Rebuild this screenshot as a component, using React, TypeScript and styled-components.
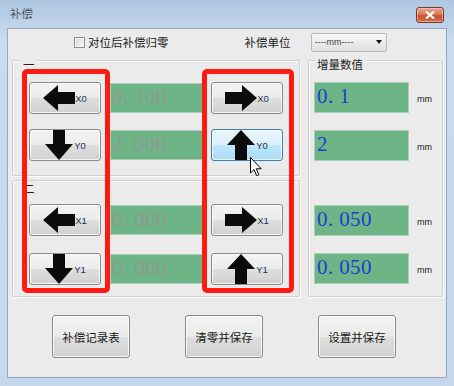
import styled, { createGlobalStyle } from 'styled-components';

const GlobalStyle = createGlobalStyle`
    html, body {
        margin: 0;
        padding: 0;
        background: #c4d6ea;
    }
    * {
        box-sizing: border-box;
    }
`

const CJK = `"Noto Sans CJK SC", "Noto Sans", sans-serif`

type ArrowDir = 'left' | 'right' | 'up' | 'down';

const Arrow = ({ dir }: { dir: ArrowDir }) => {
    const shapes: Record<ArrowDir, string> = {
        left: '0,14 15,1 15,8 32,8 32,20 15,20 15,27',
        right: '32,14 17,1 17,8 0,8 0,20 17,20 17,27',
        down: '15,30 1,14 9,14 9,0 21,0 21,14 29,14',
        up: '15,0 1,15 9,15 9,30 21,30 21,15 29,15',
    };
    const horizontal = dir === 'left' || dir === 'right';
    return (
        <svg width={horizontal ? 32 : 30} height={horizontal ? 28 : 30}
            viewBox={horizontal ? '0 0 32 28' : '0 0 30 30'}>
            <polygon points={shapes[dir]} fill="#0b0b0b" />
        </svg>
    );
};

const rows = [
    { group: '一', items: [
        { a: 'left', b: 'right', tag: 'X0', value: '0. 100' },
        { a: 'down', b: 'up', tag: 'Y0', value: '2. 000', hover: true },
    ] },
    { group: '二', items: [
        { a: 'left', b: 'right', tag: 'X1', value: '0. 000' },
        { a: 'down', b: 'up', tag: 'Y1', value: '0. 000' },
    ] },
] as const;

const steps = [
    { value: '0. 1', gap: 21 },
    { value: '2', gap: 17 },
    { value: '0. 050', gap: 44 },
    { value: '0. 050', gap: 17 },
];

export default function App() {
    return (
        <>
            <GlobalStyle />
            <Window>
                <TitleBar>
                    <Title>补偿</Title>
                    <CloseButton>
                        <svg width="10" height="8" viewBox="0 0 10 8">
                            <path d="M1 0.5 L9 7.5 M9 0.5 L1 7.5" stroke="#fff" strokeWidth="2.2" />
                        </svg>
                    </CloseButton>
                </TitleBar>
                <Client>
                    <Header>
                        <CheckLabel><CheckBox />对位后补偿归零</CheckLabel>
                        <UnitLabel>补偿单位</UnitLabel>
                        <Combo>
                            <span>----mm----</span>
                            <ComboArrow />
                        </Combo>
                    </Header>
                    <Main>
                        <LeftCol>
                            {rows.map((g, gi) => (
                                <Group key={g.group} $height={gi === 0 ? 116 : 117}
                                    $padTop={gi === 0 ? 21 : 23} $gap={gi === 0 ? 15 : 17}>
                                    <GroupLabel $left={8} $top={gi === 0 ? -4 : 0}>{g.group}</GroupLabel>
                                    {g.items.map((r) => (
                                        <AxisRow key={r.tag}>
                                            <JogButton>
                                                <Arrow dir={r.a} />
                                                <Tag>{r.tag}</Tag>
                                            </JogButton>
                                            <ValueField>{r.value}</ValueField>
                                            <JogButton $hover={'hover' in r}>
                                                <Arrow dir={r.b} />
                                                <Tag>{r.tag}</Tag>
                                            </JogButton>
                                        </AxisRow>
                                    ))}
                                </Group>
                            ))}
                        </LeftCol>
                        <StepGroup>
                            <GroupLabel $left={6} $top={-4}>增量数值</GroupLabel>
                            {steps.map((s, i) => (
                                <StepRow key={i} $gap={s.gap}>
                                    <StepField>{s.value}</StepField>
                                    <Unit>mm</Unit>
                                </StepRow>
                            ))}
                        </StepGroup>
                    </Main>
                    <Footer>
                        <ActionButton>补偿记录表</ActionButton>
                        <ActionButton>清零并保存</ActionButton>
                        <ActionButton>设置并保存</ActionButton>
                    </Footer>
                    <Highlight $left={14} $width={88} />
                    <Highlight $left={194} $width={92} />
                    <Cursor>
                        <svg width="13" height="20" viewBox="0 0 13 20">
                            <path d="M0.5 0.5 L0.5 16 L4 12.6 L6.6 18.6 L8.8 17.7 L6.3 11.8 L11.2 11.8 Z"
                                fill="#fff" stroke="#000" strokeWidth="1" strokeLinejoin="round" />
                        </svg>
                    </Cursor>
                </Client>
            </Window>
        </>
    );
}

const Window = styled.div`
    width: 454px;
    height: 386px;
    display: flex;
    flex-direction: column;
    padding: 0 7px 8px 7px;
    background: linear-gradient(180deg, #aec6e1 0%, #c9dbee 40px, #c4d7ec 100%);
`

const TitleBar = styled.div`
    height: 28px;
    display: flex;
    align-items: center;
    justify-content: space-between;
    padding: 0 3px 2px 3px;
`

const Title = styled.span`
    font-family: ${CJK};
    font-size: 11.5px;
    font-weight: 300;
    color: #111;
`

const CloseButton = styled.div`
    width: 28px;
    height: 16px;
    margin-top: 3px;
    display: flex;
    align-items: center;
    justify-content: center;
    border: 1px solid #7a3a2f;
    border-radius: 3px;
    background: linear-gradient(180deg, #e9a58f 0%, #d87a58 45%, #c9502f 55%, #d66c4c 100%);
    box-shadow: inset 0 0 0 1px rgba(255, 220, 210, 0.5);
`

const Client = styled.div`
    position: relative;
    flex: 1;
    display: flex;
    flex-direction: column;
    background: #ebebeb;
    border: 1px solid #97a9c0;
`

const Header = styled.div`
    height: 26px;
    display: flex;
    align-items: center;
    padding-left: 66px;
    font-family: ${CJK};
    font-size: 11.5px;
    color: #1a1a1a;
`

const CheckLabel = styled.label`
    display: flex;
    align-items: center;
    gap: 3px;
`

const CheckBox = styled.span`
    width: 11px;
    height: 11px;
    border: 1px solid #8e8f8f;
    background: linear-gradient(135deg, #dcdcdc 0%, #f6f6f6 100%);
    box-shadow: inset 0 0 0 1px #f4f4f4;
`

const UnitLabel = styled.span`
    margin-left: 76px;
`

const Combo = styled.div`
    margin-left: 20px;
    width: 76px;
    height: 19px;
    display: flex;
    align-items: center;
    justify-content: space-between;
    padding: 0 4px 0 3px;
    border: 1px solid #b9b9b9;
    border-radius: 2px;
    background: linear-gradient(180deg, #f6f6f6 0%, #ebebeb 50%, #e0e0e0 100%);
    font-family: "Liberation Sans", Arial, sans-serif;
    font-size: 9px;
    color: #444;
`

const ComboArrow = styled.span`
    width: 0;
    height: 0;
    border-left: 3.5px solid transparent;
    border-right: 3.5px solid transparent;
    border-top: 4px solid #111;
`

const Main = styled.div`
    display: flex;
    gap: 8px;
    padding: 5px 0 0 4px;
`

const LeftCol = styled.div`
    width: 288px;
    display: flex;
    flex-direction: column;
    gap: 4px;
`

const groupFrame = `
    position: relative;
    border: 1px solid #cfd2d4;
    border-radius: 2px;
    box-shadow: inset 1px 1px 0 #fafafa, 1px 1px 0 #fafafa;
`

const Group = styled.div<{ $height: number; $padTop: number; $gap: number }>`
    ${groupFrame}
    height: ${(p) => p.$height}px;
    display: flex;
    flex-direction: column;
    gap: ${(p) => p.$gap}px;
    padding: ${(p) => p.$padTop}px 0 0 16px;
`

const GroupLabel = styled.span<{ $left: number; $top: number }>`
    position: absolute;
    top: ${(p) => p.$top}px;
    left: ${(p) => p.$left}px;
    padding: 0 2px;
    background: #ebebeb;
    font-family: ${CJK};
    font-size: 11.5px;
    line-height: 14px;
    color: #222;
`

const AxisRow = styled.div`
    display: flex;
    align-items: center;
    height: 32px;
`

const JogButton = styled.div<{ $hover?: boolean }>`
    width: 72px;
    height: 32px;
    display: flex;
    align-items: center;
    justify-content: center;
    border: 1px solid ${(p) => (p.$hover ? '#3c7fb1' : '#8a8a8a')};
    border-radius: 3px;
    background: ${(p) => (p.$hover
        ? 'linear-gradient(180deg, #eaf6fd 0%, #d9f0fc 50%, #bee6fd 52%, #a9daf5 100%)'
        : 'linear-gradient(180deg, #f3f3f3 0%, #ebebeb 50%, #dedede 52%, #d1d1d1 100%)')};
    box-shadow: inset 0 0 0 1px rgba(255, 255, 255, 0.75);
    & + div {
        margin-left: 9px;
    }
    div + & {
        margin-left: 8px;
    }
`

const Tag = styled.span`
    font-family: "Liberation Sans", Arial, sans-serif;
    font-size: 9.5px;
    color: #23314f;
    margin-top: 1px;
`

const ValueField = styled.div`
    width: 93px;
    height: 30px;
    display: flex;
    align-items: center;
    padding: 0 0 2px 1px;
    background: #6db487;
    border: 1px solid #a9cdb6;
    font-family: "Liberation Serif", "Times New Roman", serif;
    font-size: 21px;
    letter-spacing: 0.4px;
    color: #8d9a90;
    white-space: pre;
`

const StepGroup = styled.div`
    ${groupFrame}
    width: 135px;
    height: 237px;
    display: flex;
    flex-direction: column;
    padding-left: 5px;
`

const StepRow = styled.div<{ $gap: number }>`
    display: flex;
    align-items: center;
    gap: 8px;
    margin-top: ${(p) => p.$gap}px;
`

const StepField = styled(ValueField)`
    width: 95px;
    height: 31px;
    padding-left: 2px;
    color: #1c3fd2;
`

const Unit = styled.span`
    font-family: "Liberation Sans", Arial, sans-serif;
    font-size: 9px;
    color: #222;
    margin-top: 2px;
`

const Footer = styled.div`
    display: flex;
    gap: 55px;
    padding: 18px 0 0 44px;
`

const ActionButton = styled.div`
    width: 78px;
    height: 43px;
    display: flex;
    align-items: center;
    justify-content: center;
    border: 1px solid #8a8a8a;
    border-radius: 3px;
    background: linear-gradient(180deg, #f3f3f3 0%, #ebebeb 50%, #dedede 52%, #d1d1d1 100%);
    box-shadow: inset 0 0 0 1px rgba(255, 255, 255, 0.75);
    font-family: ${CJK};
    font-size: 11.5px;
    color: #1a1a1a;
`

const Highlight = styled.div<{ $left: number; $width: number }>`
    position: absolute;
    top: 40px;
    left: ${(p) => p.$left}px;
    width: ${(p) => p.$width}px;
    height: 224px;
    border: 5px solid #ff1a12;
    border-radius: 5px;
    pointer-events: none;
`

const Cursor = styled.div`
    position: absolute;
    left: 242px;
    top: 128px;
    line-height: 0;
`
